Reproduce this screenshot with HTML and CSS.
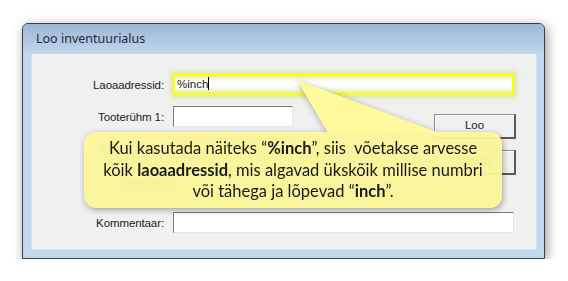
FILE: index.html
```html
<!DOCTYPE html>
<html lang="et">
<head>
    <meta charset="UTF-8">
    <title>Loo inventuurialus</title>
    <link rel="stylesheet" href="styles.css">
</head>
<body>
    <div class="window">
        <div class="titlebar">Loo inventuurialus</div>
        <div class="client">
            <div class="row">
                <span class="label">Laoaadressid:</span>
                <div class="field wide hilite">%inch<span class="caret"></span></div>
            </div>
            <div class="mid">
                <div class="rows">
                    <div class="row">
                        <span class="label">Tooterühm 1:</span>
                        <div class="field short"></div>
                    </div>
                    <div class="row">
                        <span class="label">Tooterühm 2:</span>
                        <div class="field short"></div>
                    </div>
                    <div class="row">
                        <span class="label">Tootelint:</span>
                        <div class="field short"></div>
                    </div>
                </div>
                <div class="buttons">
                    <div class="btn">Loo</div>
                    <div class="btn">Tühista</div>
                </div>
            </div>
            <div class="row">
                <span class="label">Kommentaar:</span>
                <div class="field wide"></div>
            </div>
        </div>

        <div class="callout">
            <svg class="pointer" width="230" height="54" viewBox="0 0 230 54">
                <polygon points="2,0 33,53 145,53" fill="#fdf99c"/>
            </svg>
            <div class="bubble">
                Kui kasutada näiteks “<b>%inch</b>”, siis&nbsp; võetakse arvesse<br>
                kõik <b>laoaadressid</b>, mis algavad ükskõik millise numbri<br>
                või tähega ja lõpevad “<b>inch</b>”.
            </div>
        </div>
    </div>
</body>
</html>
```

FILE: styles.css
```css
body {
    margin: 0;
    padding: 23px 0 0 22px;
    background-color: #ffffff;
}

.window {
    position: relative;
    width: 521px;
    height: 234px;
    border: 1px solid #3a3f45;
    border-radius: 6px 6px 0 0;
    background: #c2d8ee;
    box-shadow: 2px 3px 12px rgba(0, 0, 0, 0.4);
    font-family: 'Liberation Sans', Arial, sans-serif;
}

.titlebar {
    height: 30px;
    padding-left: 13px;
    line-height: 29px;
    font-family: 'Noto Sans', sans-serif;
    font-size: 12.5px;
    color: #1e2a3a;
    border-radius: 5px 5px 0 0;
    background: linear-gradient(to bottom, #9cb6d4, #b5cde6 70%, #c2d8ee);
}

.client {
    margin: 0 7px 0 8px;
    height: 175px;
    padding-top: 20px;
    background-color: #f0f0f0;
    border: 1px solid #d6e4f1;
    border-top: none;
}

.row {
    display: flex;
    align-items: center;
    gap: 9px;
    height: 21px;
}

.label {
    width: 132px;
    text-align: right;
    font-size: 11.5px;
    letter-spacing: -0.1px;
    color: #222222;
}

.field {
    box-sizing: border-box;
    height: 21px;
    background: #ffffff;
    border: 1px solid;
    border-color: #7a7a7a #e6e6e6 #e6e6e6 #7a7a7a;
    font-size: 11.5px;
    line-height: 17px;
    padding-left: 2px;
    color: #222222;
}

.wide {
    width: 341px;
}

.short {
    width: 120px;
}

.hilite {
    border: 2px solid #ffff00;
    background: linear-gradient(to bottom, #e4f0b0, #ffffff 35%, #ffffff 60%, #e4f0b0);
    box-shadow: 0 0 4px 3px rgba(210, 230, 120, 0.55);
    line-height: 16px;
}

.caret {
    display: inline-block;
    width: 1px;
    height: 13px;
    background: #000000;
    vertical-align: -2px;
}

.mid {
    display: flex;
    margin-top: 11px;
    height: 106px;
}

.rows {
    display: flex;
    flex-direction: column;
    gap: 11px;
}

.buttons {
    display: flex;
    flex-direction: column;
    gap: 11px;
    margin-left: auto;
    margin-right: 20px;
    padding-top: 8px;
}

.btn {
    box-sizing: border-box;
    width: 82px;
    height: 25px;
    border: 1px solid #8c8c8c;
    border-right: 2px solid #5a5a5a;
    border-bottom: 2px solid #5a5a5a;
    background: #f0f0f0;
    box-shadow: inset 1px 1px 0 #ffffff;
    text-align: center;
    font-size: 11.5px;
    line-height: 21px;
    color: #222222;
}

.callout {
    position: absolute;
    left: 61px;
    top: 108px;
    filter: drop-shadow(1px 2px 3px rgba(0, 0, 0, 0.35));
}

.pointer {
    position: absolute;
    left: 211px;
    top: -52px;
}

.bubble {
    width: 418px;
    height: 76px;
    box-sizing: border-box;
    padding-top: 6px;
    border-radius: 12px;
    background: rgba(253, 249, 156, 0.95);
    text-align: center;
    font-family: Lato, 'Open Sans', sans-serif;
    font-size: 16.5px;
    line-height: 21.5px;
    color: #1a1a1a;
}

.bubble b {
    font-weight: 700;
}
```
